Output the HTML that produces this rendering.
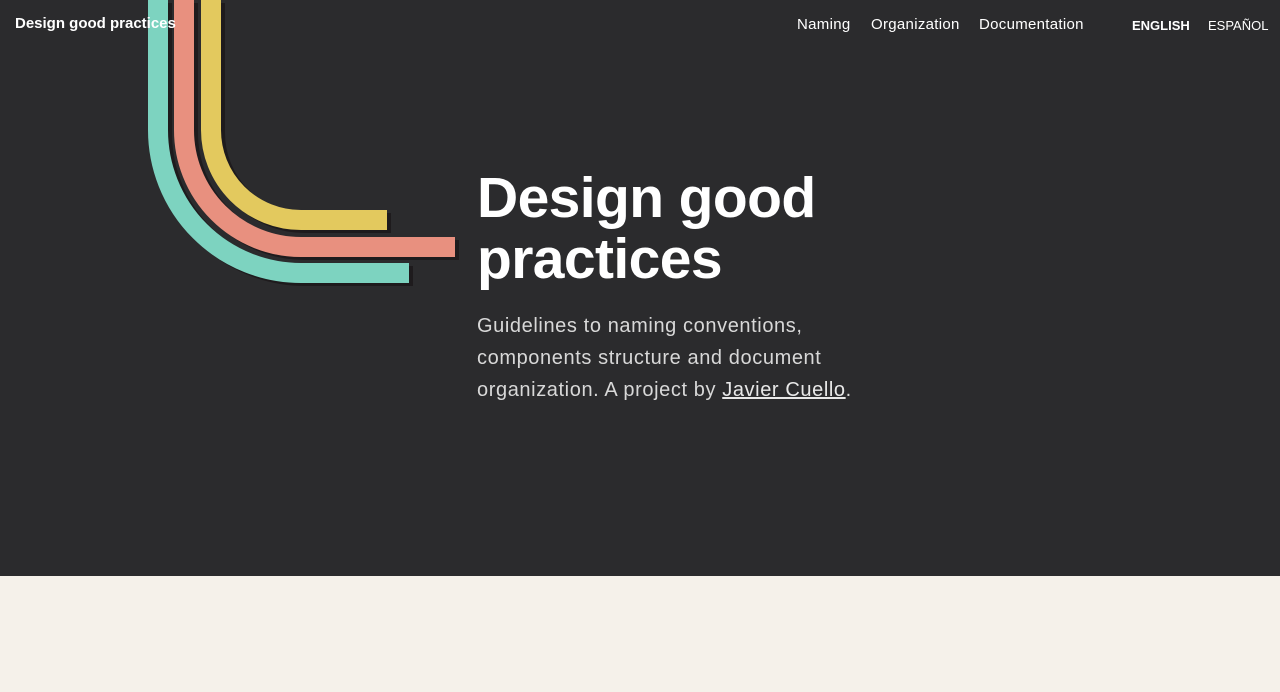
<!DOCTYPE html>
<html><head><meta charset="utf-8"><style>
body{margin:0;width:1280px;height:692px;overflow:hidden;background:#f5f1ea;font-family:"Liberation Sans",sans-serif}
.hero{position:absolute;left:0;top:0;width:1280px;height:576px;background:#2b2b2d}
.logo{position:absolute;left:15px;top:15px;color:#fff;font-weight:bold;font-size:15px;z-index:2}
.nav{position:absolute;top:16px;color:#fff;font-size:15px;letter-spacing:.3px}
.lang{position:absolute;top:18px;color:#fff;font-size:13px}
h1{position:absolute;left:477px;top:168px;margin:0;color:#fff;font-size:57px;line-height:61px;font-weight:bold;letter-spacing:-.6px}
p{position:absolute;left:477px;top:310px;margin:0;color:#d8d8d8;font-size:20px;line-height:32px;width:400px;letter-spacing:.6px}
p a{color:#e8e8e8}
</style></head><body>
<div class="hero">
<svg width="470" height="300" style="position:absolute;left:0;top:0" fill="none" stroke-width="20">
<g stroke="#1e1b1d" transform="translate(4,3)">
<path d="M158 0V130A143 143 0 0 0 301 273H409"/>
<path d="M184 0V130A117 117 0 0 0 301 247H455"/>
<path d="M211 0V130A90 90 0 0 0 301 220H387"/>
</g>
<path stroke="#7dd3c0" d="M158 0V130A143 143 0 0 0 301 273H409"/>
<path stroke="#e8907f" d="M184 0V130A117 117 0 0 0 301 247H455"/>
<path stroke="#e3c95e" d="M211 0V130A90 90 0 0 0 301 220H387"/>
</svg>
<div class="logo">Design good practices</div>
<div class="nav" style="left:797px">Naming</div>
<div class="nav" style="left:871px">Organization</div>
<div class="nav" style="left:979px">Documentation</div>
<div class="lang" style="left:1132px;font-weight:bold">ENGLISH</div>
<div class="lang" style="left:1208px">ESPAÑOL</div>
<h1>Design good<br>practices</h1>
<p>Guidelines to naming conventions, components structure and document organization. A project by <a href="#">Javier Cuello</a>.</p>
</div>
</body></html>
